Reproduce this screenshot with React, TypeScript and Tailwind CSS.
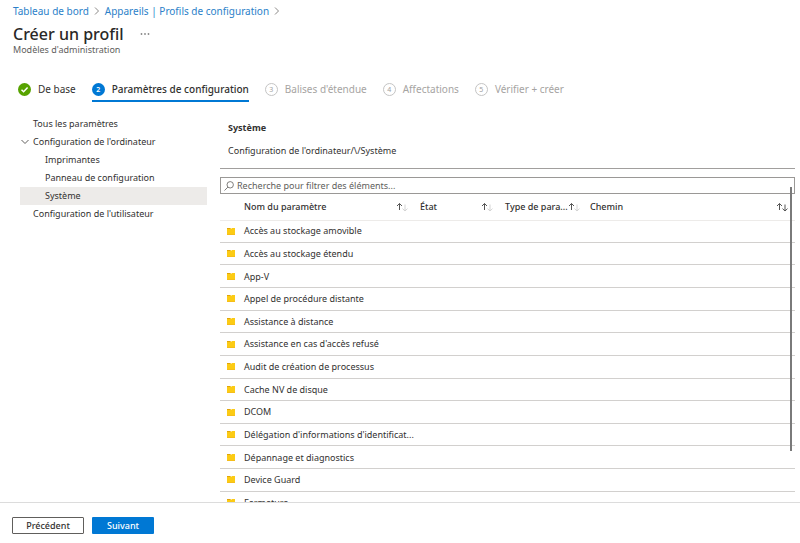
import { useState } from 'react';

const steps = [
  { label: 'De base', state: 'done' },
  { label: 'Paramètres de configuration', state: 'current' },
  { label: "Balises d'étendue", state: 'todo' },
  { label: 'Affectations', state: 'todo' },
  { label: 'Vérifier + créer', state: 'todo' },
];

const tree = [
  { label: 'Tous les paramètres', level: 0 },
  { label: "Configuration de l'ordinateur", level: 0, open: true },
  { label: 'Imprimantes', level: 1 },
  { label: 'Panneau de configuration', level: 1 },
  { label: 'Système', level: 1 },
  { label: "Configuration de l'utilisateur", level: 0 },
];

const settings = [
  'Accès au stockage amovible',
  'Accès au stockage étendu',
  'App-V',
  'Appel de procédure distante',
  'Assistance à distance',
  "Assistance en cas d'accès refusé",
  'Audit de création de processus',
  'Cache NV de disque',
  'DCOM',
  "Délégation d'informations d'identificat...",
  'Dépannage et diagnostics',
  'Device Guard',
  'Fermeture',
];

const columns = [
  { label: 'Nom du paramètre', both: false },
  { label: 'État', both: false },
  { label: 'Type de para...', both: false },
  { label: 'Chemin', both: true },
];

function Chevron({ className }: { className: string }) {
  return (
    <svg viewBox="0 0 8 8" className={className} fill="none" stroke="currentColor" aria-hidden="true">
      <path d="M2 0.5 5.5 4 2 7.5" />
    </svg>
  );
}

function SortIcon({ both }: { both: boolean }) {
  return (
    <svg viewBox="0 0 12 10" className="h-[10px] w-3 shrink-0" fill="none" aria-hidden="true">
      <path d="M3.5 8V1.5M1 4l2.5-2.5L6 4" stroke="#555" />
      <path d="M9 2.5v6.5M6.5 6.6 9 9l2.5-2.4" stroke={both ? '#555' : '#d4d4d4'} />
    </svg>
  );
}

function FolderIcon() {
  return (
    <svg viewBox="0 0 10 9" className="mx-auto h-[9px] w-[10px]" aria-hidden="true">
      <path d="M1 1h3l1 1 1-1h3v7H1z" fill="#fccb14" />
      <path d="M1 1h3l1 1H1z" fill="#e0a50a" />
      <path d="M1 7h8v1H1z" fill="#f5bd1a" />
    </svg>
  );
}

function StepBadge({ state, number }: { state: string; number: number }) {
  if (state === 'done') {
    return (
      <svg viewBox="0 0 13 13" className="size-[13px] shrink-0" aria-hidden="true">
        <circle cx="6.5" cy="6.5" r="6.5" fill="#57a300" />
        <path d="M3.5 6.7 5.6 8.8 9.6 4.6" fill="none" stroke="#fff" strokeWidth="1.5" />
      </svg>
    );
  }
  return (
    <span
      className={`flex size-[13px] shrink-0 items-center justify-center rounded-full text-[7px] leading-none ${
        state === 'current' ? 'bg-[#0078d4] font-semibold text-white' : 'border border-[#c4c4c4] text-[#a0a0a0]'
      }`}
    >
      {number}
    </span>
  );
}

export default function App() {
  const [selected, setSelected] = useState('Système');
  const [query, setQuery] = useState('');
  const rows = settings.filter((name) => name.toLowerCase().includes(query.toLowerCase()));

  return (
    <div className="flex h-screen flex-col overflow-hidden bg-white font-['Noto_Sans','Open_Sans',sans-serif] text-[9px] text-[#323130]">
      <header className="px-[13px] pt-1">
        <nav aria-label="Fil d'Ariane" className="flex h-[14px] items-center gap-1 text-[10px] text-[#2b7fc9]">
          <a href="#tableau">Tableau de bord</a>
          <Chevron className="size-2 text-[#8a8886]" />
          <a href="#profils">Appareils | Profils de configuration</a>
          <Chevron className="size-2 text-[#8a8886]" />
        </nav>
        <div className="mt-[6px] flex h-5 items-center gap-4">
          <h1 className="text-[16px] leading-5 font-medium text-[#292827]">Créer un profil</h1>
          <button type="button" aria-label="Plus d'options">
            <svg viewBox="0 0 10 2" className="h-[2px] w-[10px]" fill="#888">
              <circle cx="1.5" cy="1" r="0.9" />
              <circle cx="5" cy="1" r="0.9" />
              <circle cx="8.5" cy="1" r="0.9" />
            </svg>
          </button>
        </div>
        <p className="leading-[12px] text-[#605e5c]">Modèles d'administration</p>
      </header>

      <ol className="mt-[22px] flex gap-4 px-[18px] text-[10px]">
        {steps.map((step, index) => (
          <li key={step.label}>
            <button
              type="button"
              className={`flex h-6 items-center gap-[7px] border-b-2 ${
                step.state === 'current' ? 'border-[#0078d4] font-medium' : 'border-transparent'
              } ${step.state === 'todo' ? 'text-[#a6a4a2]' : 'text-[#323130]'}`}
            >
              <StepBadge state={step.state} number={index + 1} />
              {step.label}
            </button>
          </li>
        ))}
      </ol>

      <main className="flex min-h-0 flex-1 gap-[13px] pt-3 pr-[5px] pl-5">
        <ul className="mt-px w-[187px] shrink-0">
          {tree.map((item) => (
            <li key={item.label}>
              <button
                type="button"
                onClick={() => setSelected(item.label)}
                className={`flex h-[18px] w-full items-center ${item.level ? 'pl-[25px]' : 'pl-px'} ${
                  item.label === selected ? 'bg-[#edebe9]' : ''
                }`}
              >
                {item.level === 0 && (
                  <span className="w-3 shrink-0">
                    {item.open && <Chevron className="size-2 rotate-90 text-[#605e5c]" />}
                  </span>
                )}
                {item.label}
              </button>
            </li>
          ))}
        </ul>

        <section className="relative flex min-w-0 flex-1 flex-col">
          <h2 className="mt-[7px] px-2 leading-[14px] font-bold">Système</h2>
          <p className="mt-[9px] px-2 leading-[14px]">Configuration de l'ordinateur/\/Système</p>
          <hr className="mt-[10px] border-t border-[#a19f9d]" />
          <label className="mt-2 flex h-[17px] shrink-0 items-center gap-[3px] border border-[#9a9896] px-[3px]">
            <svg viewBox="0 0 10 10" className="size-[10px]" fill="none" stroke="#605e5c" strokeWidth="0.8" aria-hidden="true">
              <circle cx="6.2" cy="3.8" r="3.2" />
              <path d="M3.9 6.1.5 9.5" />
            </svg>
            <input
              type="text"
              aria-label="Recherche"
              value={query}
              onChange={(e) => setQuery(e.target.value)}
              placeholder="Recherche pour filtrer des éléments..."
              className="min-w-0 flex-1 outline-none placeholder:text-[#605e5c]"
            />
          </label>
          <div className="min-h-0 flex-1 overflow-hidden">
            <table className="w-full table-fixed border-collapse text-left">
              <colgroup>
                <col className="w-6" />
                <col className="w-[176px]" />
                <col className="w-[85px]" />
                <col className="w-[85px]" />
                <col />
              </colgroup>
              <thead>
                <tr className="h-[26px] border-b border-[#edebe9]">
                  <th aria-label="Icône" />
                  {columns.map((col) => (
                    <th key={col.label} className="p-0 font-medium">
                      <button
                        type="button"
                        className={`flex w-full items-center justify-between whitespace-nowrap ${
                          col.both ? 'pr-[7px]' : 'pr-3'
                        }`}
                      >
                        {col.label}
                        <SortIcon both={col.both} />
                      </button>
                    </th>
                  ))}
                </tr>
              </thead>
            </table>
            <table className="h-[294px] w-full table-fixed border-collapse text-left">
              <colgroup>
                <col className="w-6" />
                <col className="w-[176px]" />
                <col />
              </colgroup>
              <tbody>
                {rows.map((name) => (
                  <tr key={name} className="border-b border-[#d2d0ce]">
                    <td className="p-0 pr-[2px]">
                      <FolderIcon />
                    </td>
                    <td className="p-0 whitespace-nowrap">{name}</td>
                    <td className="p-0" />
                  </tr>
                ))}
              </tbody>
            </table>
          </div>
          <div className="absolute top-[73px] right-[3px] h-[264px] w-[2px] bg-[#7a7a7a]" />
        </section>
      </main>

      <footer className="flex h-[41px] shrink-0 items-center gap-2 border-t border-[#dcdcdc] px-3 pt-[5px]">
        <button type="button" className="h-[17px] w-[72px] rounded-[1px] border border-[#605e5c] font-medium">
          Précédent
        </button>
        <button type="button" className="h-[17px] w-[62px] rounded-[1px] bg-[#0078d4] font-medium text-white">
          Suivant
        </button>
      </footer>
    </div>
  );
}
